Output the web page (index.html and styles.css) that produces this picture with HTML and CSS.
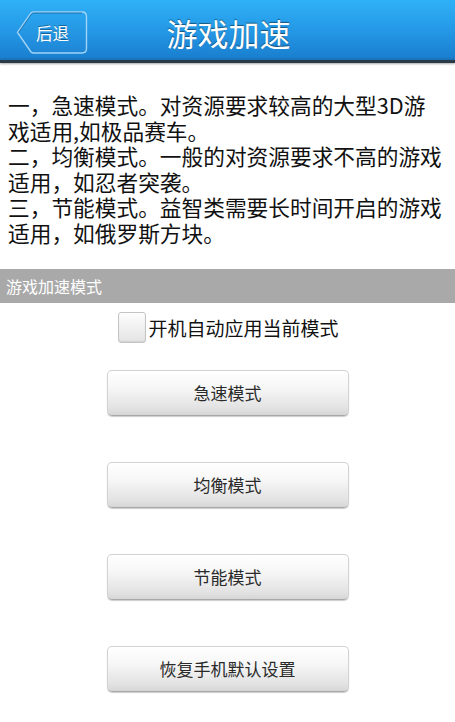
FILE: index.html
```html
<!DOCTYPE html>
<html lang="zh">
<head>
<meta charset="utf-8">
<link rel="stylesheet" href="styles.css">
</head>
<body>
<header class="topbar">
  <div class="back">
    <svg class="back-shape" width="72" height="43" viewBox="0 0 72 43">
      <defs>
        <linearGradient id="bg" x1="0" y1="0" x2="0" y2="1">
          <stop offset="0" stop-color="#2aa6ef"/>
          <stop offset="1" stop-color="#1e86d6"/>
        </linearGradient>
      </defs>
      <path d="M1.5 21.5 L15 2 Q16 1 18 1 L66 1 Q70.5 1 70.5 5.5 L70.5 37.5 Q70.5 42 66 42 L18 42 Q16 42 15 41 Z" fill="url(#bg)" stroke="#9fd3f7" stroke-width="1.4"/>
      <path d="M2.5 21.5 L15.5 3 Q16.5 2 18 2 L66 2" fill="none" stroke="#0e4f86" stroke-width="1" opacity="0.6"/>
    </svg>
    <span class="back-label">后退</span>
  </div>
  <h1 class="title">游戏加速</h1>
</header>

<section class="intro">
  <div class="line">一，急速模式。对资源要求较高的大型3D游</div>
  <div class="line">戏适用,如极品赛车。</div>
  <div class="line">二，均衡模式。一般的对资源要求不高的游戏</div>
  <div class="line">适用，如忍者突袭。</div>
  <div class="line">三，节能模式。益智类需要长时间开启的游戏</div>
  <div class="line">适用，如俄罗斯方块。</div>
</section>

<div class="section-bar">游戏加速模式</div>

<label class="auto">
  <span class="check"></span>
  <span class="auto-text">开机自动应用当前模式</span>
</label>

<div class="buttons">
  <button class="btn">急速模式</button>
  <button class="btn">均衡模式</button>
  <button class="btn">节能模式</button>
  <button class="btn">恢复手机默认设置</button>
</div>
</body>
</html>
```

FILE: styles.css
```css
* { box-sizing: border-box; }
html, body {
  margin: 0;
  padding: 0;
  background: #ffffff;
  font-family: "Noto Sans CJK SC", "Noto Sans", sans-serif;
  color: #111;
}
body { width: 455px; height: 722px; overflow: hidden; }

.topbar {
  height: 63px;
  background: linear-gradient(#30b1f7 0%, #2396e4 55%, #1a80d0 95%, #1a6fb3 100%);
  border-bottom: 3px solid #2b3a47;
  box-shadow: 0 1px 2px rgba(0,0,0,0.35);
  display: flex;
  align-items: center;
  position: relative;
}
.back {
  position: relative;
  width: 72px;
  height: 43px;
  margin-left: 16px;
  margin-top: 5px;
  display: flex;
  align-items: center;
  justify-content: center;
}
.back-shape { position: absolute; left: 0; top: 0; }
.back-label {
  position: relative;
  color: #fff;
  font-size: 16.5px;
  margin-left: 1px;
  text-shadow: 0 -1px 0 rgba(0,0,0,0.35);
}
.title {
  position: absolute;
  left: 0;
  right: 0;
  top: 13px;
  margin: 0;
  text-align: center;
  font-weight: normal;
  font-size: 31px;
  line-height: 40px;
  color: #fff;
  text-shadow: 0 -1px 1px rgba(0,0,0,0.45);
  padding-left: 2px;
}

.intro {
  padding: 29px 0 0 8px;
  font-size: 21.7px;
  line-height: 25.6px;
  color: #111;
}
.line { white-space: nowrap; }

.section-bar {
  margin-top: 23px;
  height: 34px;
  background: #a9a9a9;
  color: #fff;
  font-size: 16px;
  line-height: 34px;
  padding-left: 6px;
}

.auto {
  display: flex;
  align-items: center;
  justify-content: center;
  margin-top: 9px;
  height: 31px;
  padding-left: 2px;
}
.check {
  width: 28px;
  height: 31px;
  border: 1px solid #c4c4c4;
  border-radius: 3px;
  background: linear-gradient(#fdfdfd, #e4e4e4);
  box-shadow: inset 0 -1px 1px rgba(0,0,0,0.08);
}
.auto-text {
  font-size: 19px;
  margin-left: 2px;
  color: #111;
}

.buttons {
  display: flex;
  flex-direction: column;
  align-items: center;
  gap: 46px;
  margin-top: 27px;
}
.btn {
  width: 242px;
  height: 46px;
  border: 1px solid #d2d2d2;
  border-bottom-color: #a8a8a8;
  border-radius: 5px;
  background: linear-gradient(#ffffff 0%, #f6f6f6 40%, #e2e2e2 85%, #d6d6d6 100%);
  box-shadow: 0 1px 1px rgba(0,0,0,0.2);
  font-family: "Noto Sans CJK SC", "Noto Sans", sans-serif;
  font-size: 17px;
  color: #2a2a2a;
  padding: 0;
}
```
